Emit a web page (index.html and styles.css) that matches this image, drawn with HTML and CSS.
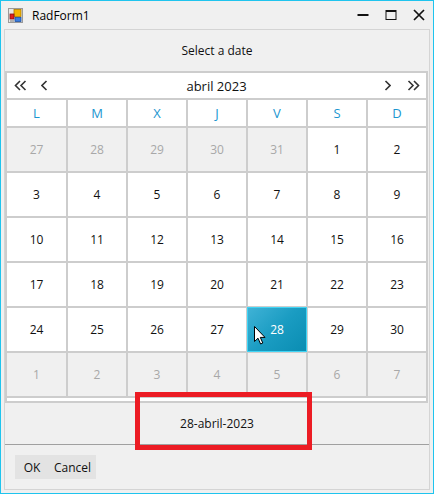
FILE: index.html
```html
<!DOCTYPE html>
<html lang="es">
<head>
    <meta charset="UTF-8">
    <title>RadForm1</title>
    <link rel="stylesheet" href="styles.css">
</head>
<body>
    <div class="window">
        <div class="titlebar">
            <svg class="app-icon" width="15" height="15" viewBox="0 0 15 15">
                <rect x="0.5" y="0.5" width="14" height="14" fill="#e8e8e8" stroke="#9a9a9a"/>
                <rect x="6" y="1.5" width="7" height="7" fill="#f4b400" stroke="#b07d00" stroke-width="0.8"/>
                <rect x="2" y="6" width="4" height="5" fill="#e02020" stroke="#8a1010" stroke-width="0.8"/>
                <rect x="7" y="9.5" width="6" height="4" fill="#3a7de0" stroke="#1d4fa0" stroke-width="0.8"/>
                <rect x="2" y="12" width="4" height="2" fill="#b0b0b0"/>
            </svg>
            <span class="title">RadForm1</span>
            <div class="controls">
                <span class="ctrl">
                    <svg width="12" height="12" viewBox="0 0 12 12"><rect x="0.5" y="5" width="11" height="2" fill="#111"/></svg>
                </span>
                <span class="ctrl">
                    <svg width="12" height="12" viewBox="0 0 12 12"><rect x="1" y="1.5" width="10" height="9" fill="none" stroke="#111" stroke-width="1"/><rect x="1" y="1" width="10" height="2" fill="#111"/></svg>
                </span>
                <span class="ctrl">
                    <svg width="12" height="12" viewBox="0 0 12 12"><path d="M1 1 L11 11 M11 1 L1 11" stroke="#111" stroke-width="1.7"/></svg>
                </span>
            </div>
        </div>

        <div class="panel">
            <div class="header">Select a date</div>

            <div class="calendar">
                <div class="nav">
                    <div class="nav-left">
                        <svg width="13" height="11" viewBox="0 0 13 11"><path d="M6 1 L1.5 5.5 L6 10 M11.5 1 L7 5.5 L11.5 10" fill="none" stroke="#333" stroke-width="1.6"/></svg>
                        <svg width="7" height="11" viewBox="0 0 7 11"><path d="M5.5 1 L1 5.5 L5.5 10" fill="none" stroke="#333" stroke-width="1.6"/></svg>
                    </div>
                    <div class="month">abril 2023</div>
                    <div class="nav-right">
                        <svg width="7" height="11" viewBox="0 0 7 11"><path d="M1.5 1 L6 5.5 L1.5 10" fill="none" stroke="#333" stroke-width="1.6"/></svg>
                        <svg width="13" height="11" viewBox="0 0 13 11"><path d="M1.5 1 L6 5.5 L1.5 10 M7 1 L11.5 5.5 L7 10" fill="none" stroke="#333" stroke-width="1.6"/></svg>
                    </div>
                </div>

                <div class="weekdays">
                    <div>L</div><div>M</div><div>X</div><div>J</div><div>V</div><div>S</div><div>D</div>
                </div>

                <div class="days">
                    <div class="other">27</div><div class="other">28</div><div class="other">29</div><div class="other">30</div><div class="other">31</div><div>1</div><div>2</div>
                    <div>3</div><div>4</div><div>5</div><div>6</div><div>7</div><div>8</div><div>9</div>
                    <div>10</div><div>11</div><div>12</div><div>13</div><div>14</div><div>15</div><div>16</div>
                    <div>17</div><div>18</div><div>19</div><div>20</div><div>21</div><div>22</div><div>23</div>
                    <div>24</div><div>25</div><div>26</div><div>27</div>
                    <div class="selected">28
                        <svg class="cursor" width="13" height="19" viewBox="0 0 13 19"><path d="M0.5 0.5 L0.5 15.5 L4 12.2 L6.6 18 L8.8 17 L6.3 11.4 L11 11.4 Z" fill="#fff" stroke="#000" stroke-width="1"/></svg>
                    </div>
                    <div>29</div><div>30</div>
                    <div class="other">1</div><div class="other">2</div><div class="other">3</div><div class="other">4</div><div class="other">5</div><div class="other">6</div><div class="other">7</div>
                </div>

                <div class="strip"></div>
            </div>

            <div class="date-label">28-abril-2023</div>

            <div class="buttons">
                <div class="btn-group">
                    <span class="btn btn-ok">OK</span>
                    <span class="btn btn-cancel">Cancel</span>
                </div>
            </div>
        </div>
    </div>

    <!-- marco rojo -->
    <div class="highlight"></div>
</body>
</html>
```

FILE: styles.css
```css
* {
    box-sizing: border-box;
}

body {
    margin: 0;
    font-family: "Open Sans", "Noto Sans", sans-serif;
    font-size: 12px;
    color: #111;
    background-color: #f0f0f0;
    position: relative;
}

.window {
    width: 434px;
    height: 494px;
    border: 1px solid #1fc4ee;
    background-color: #f0f0f0;
    display: flex;
    flex-direction: column;
}

.titlebar {
    height: 28px;
    display: flex;
    align-items: center;
    padding-left: 7px;
}

.app-icon {
    margin-right: 9px;
}

.title {
    flex: 1;
    font-size: 12px;
    color: #000;
}

.controls {
    display: flex;
}

.ctrl {
    width: 28px;
    height: 28px;
    display: flex;
    align-items: center;
    justify-content: center;
}

.panel {
    height: 461px;
    margin: 0 3px 3px 3px;
    border: 1px solid #d4d4d4;
    display: flex;
    flex-direction: column;
}

.header {
    height: 41px;
    display: flex;
    align-items: center;
    justify-content: center;
}

/* calendario */
.calendar {
    margin-right: 1px;
    padding: 2px;
    background-color: #cdcdcd;
}

.nav {
    height: 25px;
    background-color: #fff;
    display: grid;
    grid-template-columns: 1fr auto 1fr;
    align-items: center;
}

.nav-left {
    display: flex;
    align-items: center;
    gap: 14px;
    padding-left: 7px;
}

.nav-right {
    display: flex;
    align-items: center;
    justify-content: flex-end;
    gap: 16px;
    padding-right: 6px;
}

.nav svg {
    display: block;
}

.month {
    font-size: 13px;
}

.weekdays,
.days {
    display: grid;
    grid-template-columns: 59px repeat(6, 58px);
    gap: 2px;
    margin-top: 2px;
}

.weekdays div {
    height: 26px;
    background-color: #fff;
    color: #1b96d0;
    font-size: 13px;
    display: flex;
    align-items: center;
    justify-content: center;
}

.days div {
    height: 43px;
    background-color: #fff;
    display: flex;
    align-items: center;
    justify-content: center;
    position: relative;
}

.days div.other {
    background-color: #f0f0f0;
    color: #a8a8a8;
}

.days div.selected {
    background: linear-gradient(135deg, #3fb2d6 0%, #1a9cc2 50%, #0a8db2 100%);
    color: #fff;
    outline: 1px solid #42d4f4;
}

.cursor {
    position: absolute;
    left: 6px;
    top: 18px;
}

.strip {
    height: 3px;
    margin-top: 2px;
    background-color: #fff;
}

.date-label {
    height: 41px;
    display: flex;
    align-items: center;
    justify-content: center;
}

.buttons {
    flex: 1;
    border-top: 1px solid #a0a0a0;
    padding: 10px 0 0 10px;
}

.btn-group {
    display: inline-flex;
    height: 24px;
    background-color: #e3e3e3;
}

.btn {
    display: flex;
    align-items: center;
    justify-content: center;
}

.btn-ok {
    width: 34px;
}

.btn-cancel {
    width: 47px;
}

.highlight {
    position: absolute;
    left: 135px;
    top: 392px;
    width: 177px;
    height: 58px;
    border: 5px solid #ec1c24;
}
```
